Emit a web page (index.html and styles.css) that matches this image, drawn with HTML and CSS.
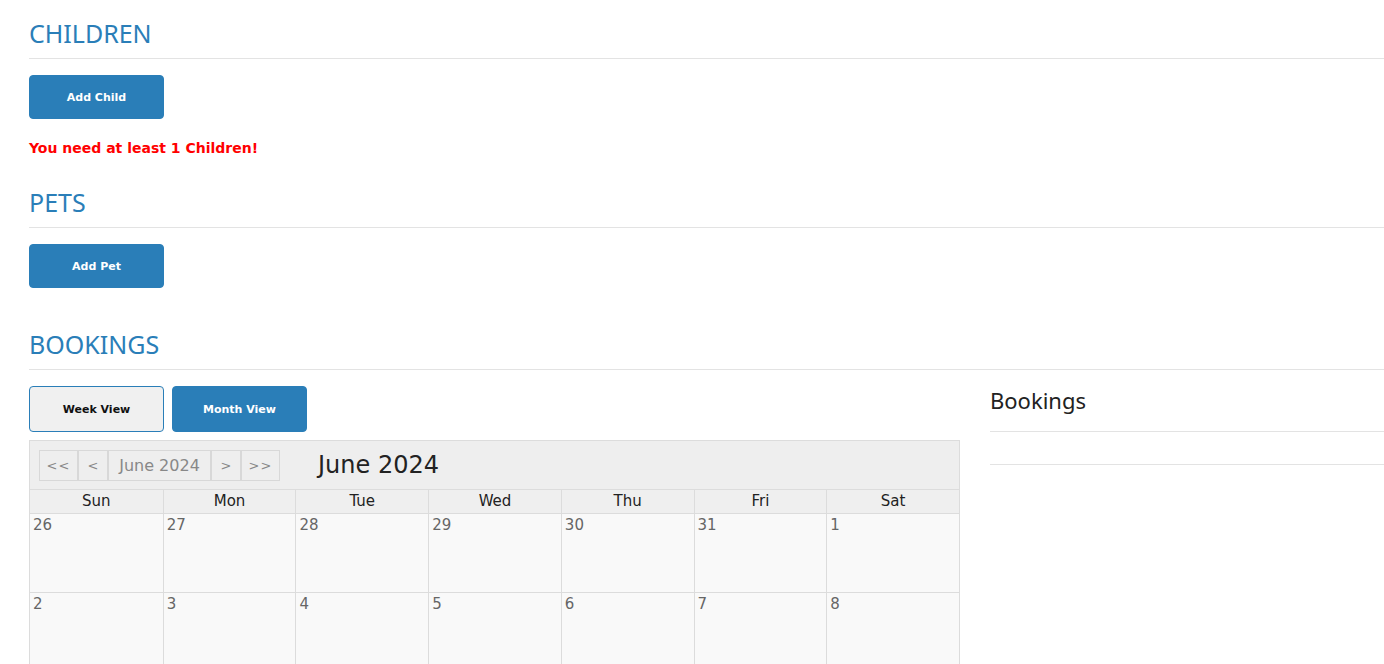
FILE: index.html
```html
<!DOCTYPE html>
<html lang="en">
<head>
  <meta charset="UTF-8">
  <title>Family</title>
  <meta name="viewport" content="width=device-width, initial-scale=1.0">
  <link rel="stylesheet" href="styles.css">
</head>
<body>
  <section class="block">
    <h2 class="section-title">CHILDREN</h2>
    <button class="btn btn-primary">Add Child</button>
    <p class="error">You need at least 1 Children!</p>
  </section>

  <section class="block">
    <h2 class="section-title">PETS</h2>
    <button class="btn btn-primary">Add Pet</button>
  </section>

  <section class="block bookings">
    <h2 class="section-title">BOOKINGS</h2>
    <div class="bookings-row">
      <div class="calendar-col">
        <div class="view-switch">
          <button class="btn btn-light">Week View</button>
          <button class="btn btn-primary">Month View</button>
        </div>

        <div class="calendar">
          <div class="cal-toolbar">
            <div class="cal-nav">
              <button class="nav-btn nav-wide">&lt;&lt;</button>
              <button class="nav-btn">&lt;</button>
              <button class="nav-btn nav-label">June 2024</button>
              <button class="nav-btn">&gt;</button>
              <button class="nav-btn nav-wide">&gt;&gt;</button>
            </div>
            <div class="cal-title">June 2024</div>
          </div>
          <div class="cal-grid">
            <div class="cal-head">Sun</div>
            <div class="cal-head">Mon</div>
            <div class="cal-head">Tue</div>
            <div class="cal-head">Wed</div>
            <div class="cal-head">Thu</div>
            <div class="cal-head">Fri</div>
            <div class="cal-head">Sat</div>

            <div class="cal-day">26</div>
            <div class="cal-day">27</div>
            <div class="cal-day">28</div>
            <div class="cal-day">29</div>
            <div class="cal-day">30</div>
            <div class="cal-day">31</div>
            <div class="cal-day">1</div>

            <div class="cal-day">2</div>
            <div class="cal-day">3</div>
            <div class="cal-day">4</div>
            <div class="cal-day">5</div>
            <div class="cal-day">6</div>
            <div class="cal-day">7</div>
            <div class="cal-day">8</div>
          </div>
        </div>
      </div>

      <aside class="side-col">
        <h3 class="side-title">Bookings</h3>
        <div class="side-list"></div>
      </aside>
    </div>
  </section>
</body>
</html>
```

FILE: styles.css
```css
:root {
  --blue: #2a7eb8;
  --line: #e3e3e3;
  --cell-line: #dcdcdc;
}

body {
  margin: 0;
  padding: 17px 0 0 29px;
  font-family: "Noto Sans", sans-serif;
  color: #222;
  background: #fff;
  overflow: hidden;
}

.section-title {
  font-family: "Noto Sans", sans-serif;
  font-weight: 400;
  font-size: 25px;
  line-height: 32px;
  color: var(--blue);
  margin: 0 0 10px 0;
  padding-bottom: 9px;
  border-bottom: 1px solid var(--line);
}

.block {
  margin-bottom: 22px;
}

.btn {
  font-family: "DejaVu Sans", sans-serif;
  font-weight: 700;
  font-size: 11px;
  width: 135px;
  height: 44px;
  border-radius: 4px;
  border: 1px solid var(--blue);
  cursor: pointer;
  margin: 6px 0 0 0;
}

.btn-primary {
  background: var(--blue);
  color: #fff;
}

.btn-light {
  background: #f0f0f0;
  color: #111;
}

.error {
  font-family: "DejaVu Sans", sans-serif;
  font-weight: 700;
  font-size: 14px;
  color: #f00;
  margin: 21px 0 30px 0;
}

.bookings {
  margin-top: 40px;
}

.bookings-row {
  display: grid;
  grid-template-columns: 931px 1fr;
  gap: 30px;
}

.view-switch {
  display: flex;
  gap: 8px;
  margin-bottom: 8px;
}

.view-switch .btn {
  height: 46px;
}

/* calendar */
.calendar {
  border: 1px solid var(--cell-line);
  font-family: "DejaVu Sans", sans-serif;
}

.cal-toolbar {
  background: #eee;
  height: 48px;
  display: flex;
  align-items: center;
  padding-left: 9px;
  gap: 38px;
}

.cal-nav {
  display: flex;
}

.nav-btn {
  font-family: "DejaVu Sans", sans-serif;
  font-size: 13px;
  color: #888;
  background: #eee;
  border: 1px solid #d8d8d8;
  height: 31px;
  width: 30px;
  padding: 0;
  margin: 0;
}

.nav-wide {
  width: 39px;
  letter-spacing: 1px;
}

.nav-label {
  width: 103px;
  font-size: 16px;
}

.cal-title {
  font-size: 24px;
  color: #222;
}

.cal-grid {
  display: grid;
  grid-template-columns: repeat(7, 1fr);
}

.cal-head {
  background: #efefef;
  text-align: center;
  font-size: 15px;
  height: 23px;
  line-height: 22px;
  border-top: 1px solid var(--cell-line);
  border-left: 1px solid var(--cell-line);
  color: #222;
}

.cal-day {
  background: #f9f9f9;
  font-size: 15px;
  color: #666;
  height: 79px;
  padding: 2px 3px;
  box-sizing: border-box;
  border-top: 1px solid var(--cell-line);
  border-left: 1px solid var(--cell-line);
}

.cal-head:nth-child(7n+1),
.cal-day:nth-child(7n+1) {
  border-left: none;
}

/* side list */
.side-title {
  font-family: "Noto Sans", sans-serif;
  font-weight: 400;
  font-size: 22px;
  color: #222;
  margin: 0;
  padding: 5px 0 16px 0;
  border-bottom: 1px solid var(--line);
}

.side-list {
  height: 32px;
  border-bottom: 1px solid var(--line);
}
```
